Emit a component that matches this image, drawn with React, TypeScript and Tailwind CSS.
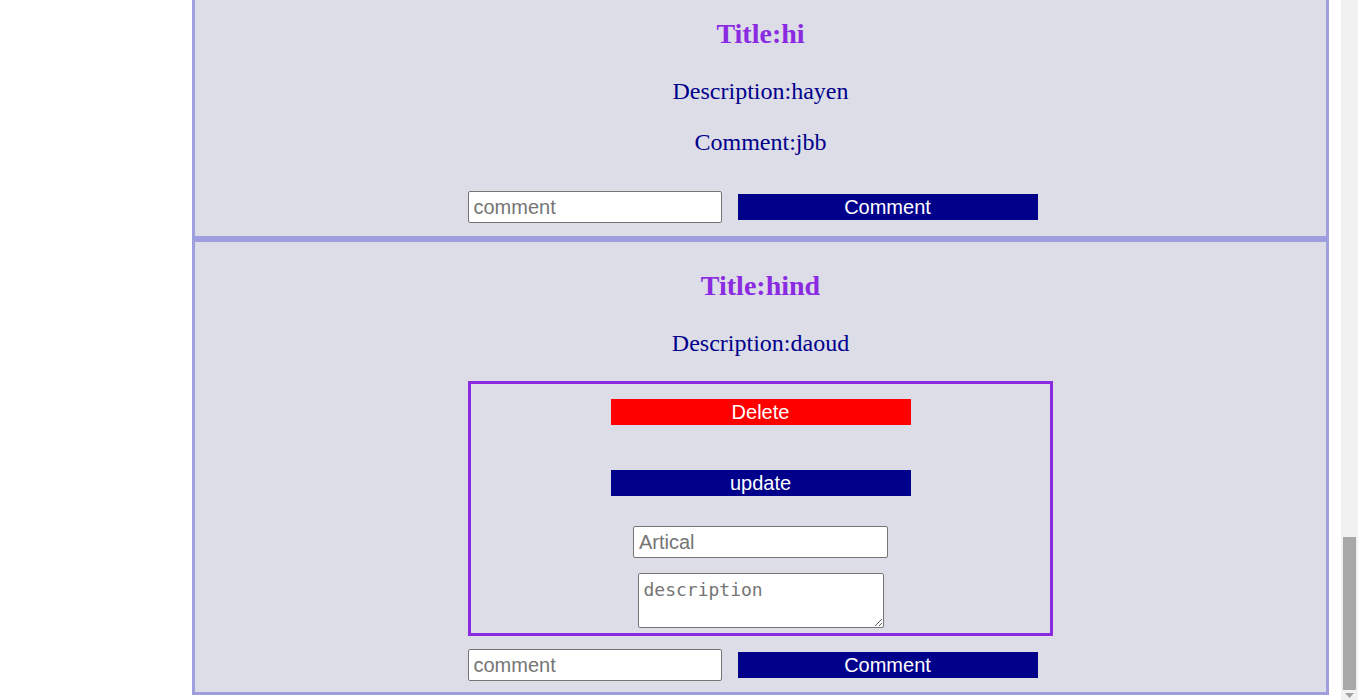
import React from "react";

type Post = { title: string; description: string; comment?: string; owner?: boolean };

const posts: Post[] = [
  { title: "hi", description: "hayen", comment: "jbb" },
  { title: "hind", description: "daoud", owner: true },
];

const sans = "font-['Liberation_Sans',Arial,sans-serif]";
const serif = "font-['Liberation_Serif','Times_New_Roman',serif]";

const CommentRow: React.FC = () => (
  <div className="mx-auto flex w-[586px] items-center">
    <input
      placeholder="comment"
      className={`${sans} h-[32px] w-[254px] rounded-[2px] border border-[#767676] bg-white px-[5px] text-[20px] text-black placeholder:text-[#757575] outline-none`}
    />
    <button className={`${sans} ml-[16px] h-[26px] w-[300px] bg-[#00008b] text-[20px] leading-[26px] text-white`}>
      Comment
    </button>
  </div>
);

const OwnerPanel: React.FC = () => (
  <div className="mx-auto mt-[24px] flex h-[255px] w-[585px] flex-col items-center border-[3px] border-[#8a2be2]">
    <button className={`${sans} mt-[15px] h-[26px] w-[300px] bg-[#ff0000] text-[20px] leading-[26px] text-white`}>
      Delete
    </button>
    <button className={`${sans} mt-[45px] h-[26px] w-[300px] bg-[#00008b] text-[20px] leading-[26px] text-white`}>
      update
    </button>
    <input
      placeholder="Artical"
      className={`${sans} mt-[30px] h-[32px] w-[255px] rounded-[2px] border border-[#767676] bg-white px-[5px] text-[20px] placeholder:text-[#757575] outline-none`}
    />
    <textarea
      placeholder="description"
      className="mt-[15px] h-[55px] w-[246px] rounded-[2px] border border-[#767676] bg-white px-[5px] pt-[4px] font-['DejaVu_Sans_Mono',monospace] text-[18px] leading-[24px] placeholder:text-[#757575] outline-none"
    />
  </div>
);

const Card: React.FC<{ post: Post; first?: boolean }> = ({ post, first }) => (
  <div className={`${first ? "-mt-[13px]" : ""} border-[3px] border-[#9f9fe0] bg-[#dddde8] text-center`}>
    <h2 className={`${serif} mt-[28px] text-[28px] font-bold leading-[32px] text-[#8a2be2]`}>
      Title:{post.title}
    </h2>
    <p className={`${serif} mt-[27px] text-[24px] leading-[28px] text-[#00008b]`}>
      Description:{post.description}
    </p>
    {post.comment && (
      <p className={`${serif} mt-[23px] text-[24px] leading-[28px] text-[#00008b]`}>
        Comment:{post.comment}
      </p>
    )}
    {post.owner && <OwnerPanel />}
    <div className={post.owner ? "mt-[13px] mb-[11px]" : "mt-[35px] mb-[13px]"}>
      <CommentRow />
    </div>
  </div>
);

const App: React.FC = () => {
  return (
    <div className="flex h-[700px] w-full overflow-hidden bg-white">
      <div className="flex-1 pl-[192px]">
        <div className="w-[1137px]">
          {posts.map((p, i) => (
            <Card key={p.title} post={p} first={i === 0} />
          ))}
        </div>
      </div>

      {/* fake browser scrollbar, page is scrolled to the bottom */}
      <div className="flex w-[17px] flex-col bg-[#f1f1f1]">
        <div className="flex-1" />
        <div className="mx-[2px] h-[153px] bg-[#a8a8a8]" />
        <div className="flex h-[10px] items-center justify-center">
          <svg width="9" height="5" viewBox="0 0 9 5">
            <path d="M0 0h9L4.5 5z" fill="#a3a3a3" />
          </svg>
        </div>
      </div>
    </div>
  );
};

export default App;
